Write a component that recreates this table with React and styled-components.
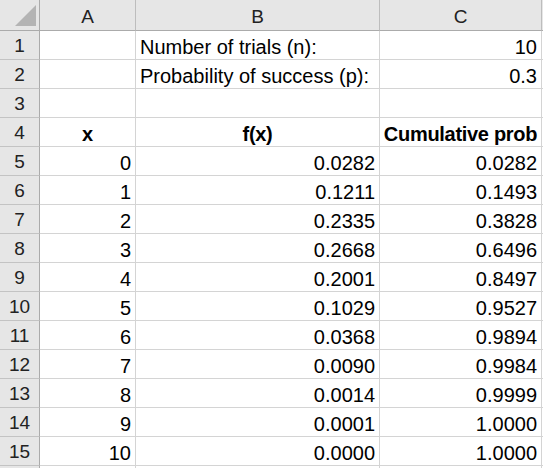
import React from "react";
import styled, { createGlobalStyle } from "styled-components";

const Global = createGlobalStyle`
  html, body { margin: 0; padding: 0; background: #ffffff; }
  body { font-family: "Liberation Sans", Arial, sans-serif; }
`;

const Sheet = styled.div`
  width: 543px;
  height: 468px;
  overflow: hidden;
  display: grid;
  grid-template-columns: 40px 96px 244px 162px 120px;
  grid-template-rows: 31px repeat(16, 29px);
  font-family: "Liberation Sans", Arial, sans-serif;
  font-size: 20px;
  color: #000;
  background: #fff;
`;

const Corner = styled.div`
  box-sizing: border-box;
  background: #e6e6e6;
  border-right: 1px solid #ababab;
  border-bottom: 1px solid #ababab;
  display: flex;
  align-items: flex-end;
  justify-content: flex-end;
  padding: 0 3px 4px 0;
`;

const ColHeader = styled.div`
  box-sizing: border-box;
  background: #e6e6e6;
  border-right: 1px solid #bdbdbd;
  border-bottom: 1px solid #ababab;
  display: flex;
  align-items: flex-end;
  justify-content: center;
  padding-bottom: 3px;
  font-size: 19px;
  line-height: 20px;
  color: #222;
`;

const RowHeader = styled.div`
  box-sizing: border-box;
  background: #e6e6e6;
  border-right: 1px solid #ababab;
  border-bottom: 1px solid #c3c3c3;
  display: flex;
  align-items: flex-end;
  justify-content: center;
  padding-bottom: 3px;
  font-size: 19px;
  line-height: 20px;
  color: #222;
`;

const Cell = styled.div`
  box-sizing: border-box;
  border-right: 1px solid #d4d4d4;
  border-bottom: 1px solid #d4d4d4;
  display: flex;
  align-items: flex-end;
  justify-content: ${(p) =>
    p.$align === "right" ? "flex-end" : p.$align === "center" ? "center" : "flex-start"};
  padding: 0 4px 2px 4px;
  line-height: 20px;
  font-weight: ${(p) => (p.$bold ? 700 : 400)};
  letter-spacing: ${(p) => (p.$bold ? "-0.3px" : "0")};
  white-space: nowrap;
  overflow: visible;
`;

const CornerMark = () => (
  <svg width="21" height="21" viewBox="0 0 21 21">
    <polygon points="21,0 21,21 0,21" fill="#b4b4b4" />
  </svg>
);

const fx = ["0.0282", "0.1211", "0.2335", "0.2668", "0.2001", "0.1029", "0.0368", "0.0090", "0.0014", "0.0001", "0.0000"];
const cum = ["0.0282", "0.1493", "0.3828", "0.6496", "0.8497", "0.9527", "0.9894", "0.9984", "0.9999", "1.0000", "1.0000"];

const rows = [
  [{}, { v: "Number of trials (n):", a: "left" }, { v: "10", a: "right" }],
  [{}, { v: "Probability of success (p):", a: "left" }, { v: "0.3", a: "right" }],
  [{}, {}, {}],
  [
    { v: "x", a: "center", b: true },
    { v: "f(x)", a: "center", b: true },
    { v: "Cumulative prob", a: "center", b: true },
  ],
  ...fx.map((f, i) => [
    { v: String(i), a: "right" },
    { v: f, a: "right" },
    { v: cum[i], a: "right" },
  ]),
  [{}, {}, {}],
];

export default function App() {
  return (
    <>
      <Global />
      <Sheet>
        <Corner>
          <CornerMark />
        </Corner>
        {["A", "B", "C", ""].map((c, i) => (
          <ColHeader key={i}>{c}</ColHeader>
        ))}
        {rows.map((r, ri) => (
          <React.Fragment key={ri}>
            <RowHeader>{ri < 15 ? ri + 1 : ""}</RowHeader>
            {r.map((c, ci) => (
              <Cell key={ci} $align={c.a} $bold={c.b}>
                {c.v || ""}
              </Cell>
            ))}
            <Cell />
          </React.Fragment>
        ))}
      </Sheet>
    </>
  );
}
